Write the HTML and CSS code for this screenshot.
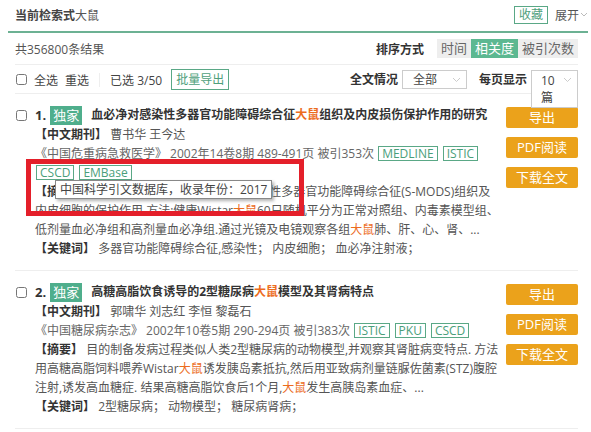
FILE: index.html
```html
<!DOCTYPE html>
<html lang="zh-CN">
<head>
    <meta charset="UTF-8">
    <title>检索结果</title>
    <link rel="stylesheet" href="styles.css">
</head>
<body>

<div class="page">
    <div class="search-head">
        <div class="query"><b>当前检索式</b>大鼠</div>
        <div class="head-actions">
            <span class="btn-outline">收藏</span>
            <span class="expand">展开</span>
            <svg class="expand-caret" width="8" height="6" viewBox="0 0 8 6"><polyline points="1,1 4,4 7,1" fill="none" stroke="#bbb" stroke-width="1"/></svg>
        </div>
    </div>

    <div class="main">
        <div class="summary">
            <span>共356800条结果</span>
            <div class="sort">
                <span class="label">排序方式</span>
                <div class="sort-tabs">
                    <span>时间</span>
                    <span class="active">相关度</span>
                    <span>被引次数</span>
                </div>
            </div>
        </div>

        <div class="toolbar">
            <div class="tool-left">
                <input type="checkbox" class="check">
                <span>全选</span>
                <span>重选</span>
                <span class="sep"></span>
                <span>已选 3/50</span>
                <span class="btn-outline">批量导出</span>
            </div>
            <div class="tool-right">
                <span class="label">全文情况</span>
                <div class="select select-all">全部
                    <svg class="caret" width="9" height="6" viewBox="0 0 9 6"><polyline points="1,1 4.5,4.5 8,1" fill="none" stroke="#ccc" stroke-width="1"/></svg>
                </div>
                <span class="label">每页显示</span>
                <div class="select select-size">10 篇
                    <svg class="caret" width="9" height="6" viewBox="0 0 9 6"><polyline points="1,1 4.5,4.5 8,1" fill="none" stroke="#ccc" stroke-width="1"/></svg>
                </div>
            </div>
        </div>

        <!-- result 1 -->
        <div class="result">
            <input type="checkbox" class="check result-check">
            <div class="result-body">
                <div class="title"><span class="num">1.</span><span class="badge">独家</span>血必净对感染性多器官功能障碍综合征<em>大鼠</em>组织及内皮损伤保护作用的研究</div>
                <div class="line"><span class="tag-label">【中文期刊】</span> 曹书华 王今达</div>
                <div class="line source">《中国危重病急救医学》 2002年14卷8期 489-491页 被引353次 <span class="db">MEDLINE</span><span class="db">ISTIC</span><span class="db has-tip">CSCD<span class="tooltip">中国科学引文数据库，收录年份：2017</span></span><span class="db">EMBase</span></div>
                <div class="line abstract"><span class="tag-label">【摘要】</span> 目的:探讨中药血必净注射液对感染性多器官功能障碍综合征(S-MODS)组织及内皮细胞的保护作用.方法:健康Wistar<em>大鼠</em>60只随机平分为正常对照组、内毒素模型组、低剂量血必净组和高剂量血必净组.通过光镜及电镜观察各组<em>大鼠</em>肺、肝、心、肾、...</div>
                <div class="line"><span class="tag-label">【关键词】</span> 多器官功能障碍综合征,感染性； 内皮细胞； 血必净注射液；</div>
                <div class="highlight-box"></div>
            </div>
            <div class="actions">
                <span class="btn">导出</span>
                <span class="btn">PDF阅读</span>
                <span class="btn">下载全文</span>
            </div>
        </div>

        <!-- result 2 -->
        <div class="result">
            <input type="checkbox" class="check result-check">
            <div class="result-body">
                <div class="title"><span class="num">2.</span><span class="badge">独家</span>高糖高脂饮食诱导的2型糖尿病<em>大鼠</em>模型及其肾病特点</div>
                <div class="line"><span class="tag-label">【中文期刊】</span> 郭啸华 刘志红 李恒 黎磊石</div>
                <div class="line source">《中国糖尿病杂志》 2002年10卷5期 290-294页 被引383次 <span class="db">ISTIC</span><span class="db">PKU</span><span class="db">CSCD</span></div>
                <div class="line abstract"><span class="tag-label">【摘要】</span> 目的制备发病过程类似人类2型糖尿病的动物模型,并观察其肾脏病变特点. 方法用高糖高脂饲料喂养Wistar<em>大鼠</em>诱发胰岛素抵抗,然后用亚致病剂量链脲佐菌素(STZ)腹腔注射,诱发高血糖症. 结果高糖高脂饮食后1个月,<em>大鼠</em>发生高胰岛素血症、...</div>
                <div class="line"><span class="tag-label">【关键词】</span> 2型糖尿病； 动物模型； 糖尿病肾病；</div>
            </div>
            <div class="actions">
                <span class="btn">导出</span>
                <span class="btn">PDF阅读</span>
                <span class="btn">下载全文</span>
            </div>
        </div>
    </div>
</div>

</body>
</html>
```

FILE: styles.css
```css
body {
    margin: 0;
    padding: 0;
    background-color: #fff;
    font-family: "Open Sans", "Noto Sans CJK SC", sans-serif;
    font-size: 12px;
    color: #555;
}
em {
    font-style: normal;
    color: #ec6c1e;
}
.page {
    width: 591px;
    height: 432px;
    overflow: hidden;
    padding: 0 3px 0 8px;
    box-sizing: border-box;
}
.search-head {
    display: flex;
    justify-content: space-between;
    align-items: center;
    height: 32px;
    padding-left: 7px;
    border-bottom: 2px solid #6cb193;
    box-sizing: border-box;
    position: relative;
    top: 1px;
}
.query {
    color: #555;
    margin-top: -2px;
}
.query b {
    color: #444;
}
.head-actions {
    display: flex;
    align-items: center;
    margin-top: -3px;
}
.btn-outline {
    display: inline-block;
    border: 1px solid #5aa886;
    color: #4f9f7c;
    padding: 0 4px;
    line-height: 16px;
    font-size: 12px;
}
.expand {
    margin-left: 7px;
    color: #555;
}
.expand-caret {
    margin-left: 1px;
}
.main {
    padding: 0 10px 0 7px;
}
.summary {
    display: flex;
    justify-content: space-between;
    align-items: center;
    height: 31px;
    border-bottom: 1px solid #eee;
    padding-top: 1px;
}
.label {
    font-weight: bold;
    color: #333;
}
.sort {
    display: flex;
    align-items: center;
}
.sort .label {
    margin-right: 13px;
}
.sort-tabs {
    display: flex;
    background-color: #eee;
}
.sort-tabs span {
    padding: 0 4px;
    line-height: 19px;
    font-size: 13px;
    color: #666;
}
.sort-tabs .active {
    background-color: #5cb891;
    color: #fff;
}
.toolbar {
    display: flex;
    justify-content: space-between;
    align-items: flex-start;
    height: 29px;
    border-bottom: 1px solid #eee;
    box-sizing: border-box;
}
.tool-left {
    display: flex;
    align-items: center;
    gap: 7px;
    margin-top: 4px;
    color: #444;
}
.check {
    width: 11px;
    height: 11px;
    margin: 0 0 0 1px;
}
.sep {
    width: 1px;
    height: 14px;
    background-color: #eee;
    margin: 0 3px;
}
.tool-left .btn-outline {
    line-height: 19px;
    margin-left: 2px;
}
.tool-right {
    display: flex;
    align-items: flex-start;
    margin-top: 5px;
}
.tool-right .label {
    line-height: 19px;
    margin-right: 4px;
}
.select {
    position: relative;
    border: 1px solid #ccc;
    box-sizing: border-box;
    color: #444;
    background-color: #fff;
    z-index: 1;
}
.select-all {
    width: 65px;
    height: 19px;
    line-height: 17px;
    padding-left: 10px;
    margin-right: 12px;
}
.select-size {
    width: 47px;
    height: 38px;
    line-height: 17px;
    padding: 1px 18px 0 9px;
}
.caret {
    position: absolute;
    right: 5px;
    top: 6px;
}
.result {
    display: flex;
    border-bottom: 1px solid #eee;
    padding: 11px 0 12px;
}
.result-check {
    margin-top: 5px;
    margin-right: 8px;
}
.result-body {
    position: relative;
    width: 464px;
    flex: none;
}
.title {
    line-height: 20px;
    font-weight: bold;
    color: #333;
    display: flex;
    align-items: center;
}
.title .num {
    font-size: 13px;
    margin-right: 4px;
}
.badge {
    background-color: #4fae8c;
    color: #fff;
    font-weight: normal;
    font-size: 13px;
    padding: 0 3px;
    line-height: 19px;
    margin-right: 9px;
}
.line {
    line-height: 19px;
}
.tag-label {
    color: #333;
    font-weight: bold;
}
.source {
    color: #666;
}
.db {
    position: relative;
    display: inline-block;
    border: 1px solid #5aa886;
    color: #4a9e7a;
    padding: 0 3px;
    line-height: 13px;
    font-size: 12px;
    margin: 0 4px 0 1px;
}
.tooltip {
    position: absolute;
    left: 18px;
    top: 14px;
    white-space: nowrap;
    background-color: #fff;
    border: 1px solid #888;
    box-shadow: 2px 2px 3px rgba(0, 0, 0, 0.3);
    color: #444;
    padding: 0 4px;
    line-height: 17px;
    z-index: 2;
}
.highlight-box {
    position: absolute;
    left: -9px;
    top: 54px;
    width: 278px;
    height: 57px;
    border: 5px solid #e41f2a;
    box-sizing: border-box;
    z-index: 3;
}
.actions {
    display: flex;
    flex-direction: column;
    gap: 9px;
    margin-left: 7px;
    margin-top: 2px;
}
.btn {
    display: block;
    width: 72px;
    height: 21px;
    line-height: 21px;
    background-color: #eba21b;
    color: #fff;
    text-align: center;
    font-size: 13px;
    border-radius: 2px;
}
```
